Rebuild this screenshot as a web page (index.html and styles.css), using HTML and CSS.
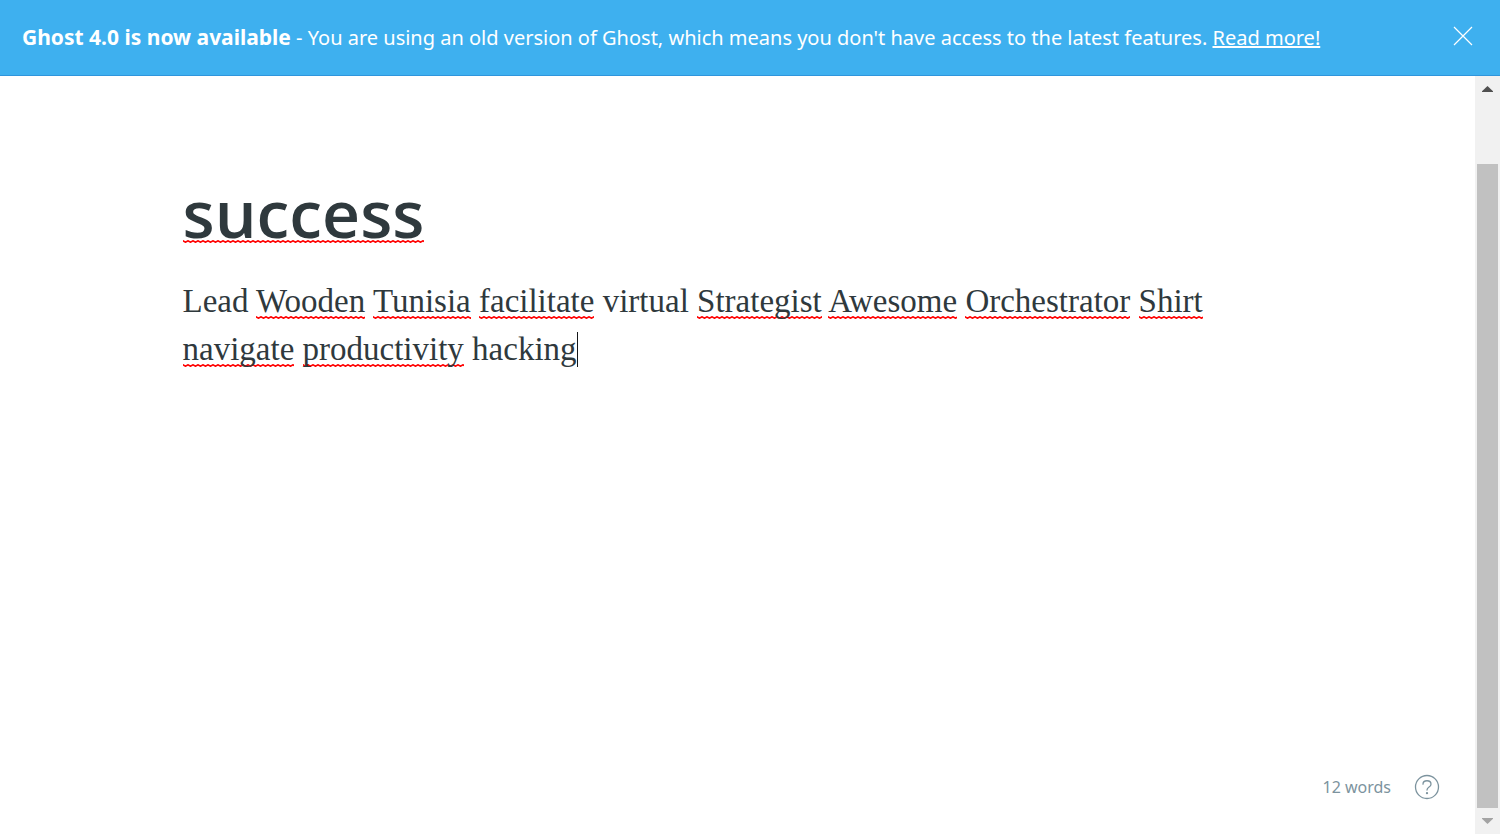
FILE: index.html
```html
<!DOCTYPE html>
<html lang="en">
<head>
<meta charset="utf-8">
<meta name="viewport" content="width=device-width, initial-scale=1">
<title>Editor - Ghost</title>
<link rel="stylesheet" href="styles.css">
</head>
<body>
<div class="app">
  <header class="alert">
    <p class="alert-text"><strong class="alert-title">Ghost 4.0 is now available</strong> - You are using an old version of Ghost, which means you don't have access to the latest features. <a class="alert-link" href="#">Read more!</a></p>
    <button class="alert-close" type="button" aria-label="Close">
      <svg width="20" height="20" viewBox="0 0 20 20" fill="none" stroke="currentColor" stroke-width="1.2"><path d="M1 1l18 18M19 1L1 19"/></svg>
    </button>
  </header>
  <div class="workspace">
    <main class="editor">
      <article class="post">
        <h1 class="post-title"><span class="misspelt">success</span></h1>
        <p class="post-body">Lead <span class="misspelt">Wooden</span> <span class="misspelt">Tunisia</span> <span class="misspelt">facilitate</span> virtual <span class="misspelt">Strategist</span> <span class="misspelt">Awesome</span> <span class="misspelt">Orchestrator</span> <span class="misspelt">Shirt</span> <span class="misspelt">navigate</span> <span class="misspelt">productivity</span> hacking<span class="caret"></span></p>
      </article>
      <footer class="status">
        <span class="word-count">12 words</span>
        <a class="help" href="#" aria-label="Help">
          <svg width="26" height="26" viewBox="0 0 26 26" fill="none" stroke="currentColor" stroke-width="1.3" stroke-linecap="round"><circle cx="13" cy="13" r="11.500"/><path d="M9 10.200C9 5.600 17 5.600 17 10.200C17 13.200 13 12.800 13 16"/><circle cx="13" cy="19.200" r=".5"/></svg>
        </a>
      </footer>
    </main>
    <div class="scrollbar" aria-hidden="true">
      <svg class="arrow arrow-up" width="11" height="6" viewBox="0 0 11 6"><path fill="currentColor" d="M0 6v-.8L5.500 0 11 5.200V6z"/></svg>
      <div class="track"><div class="thumb"></div></div>
      <svg class="arrow arrow-down" width="11" height="6" viewBox="0 0 11 6"><path fill="currentColor" d="M0 0v.8L5.500 6 11 .8V0z"/></svg>
    </div>
  </div>
</div>
</body>
</html>
```
FILE: styles.css
```css
* {
  box-sizing: border-box;
}

body {
  margin: 0;
  background: #fff;
  color: #2f393d;
  font-family: "Segoe UI", "Noto Sans", "Open Sans", sans-serif;
}

.app {
  display: flex;
  flex-direction: column;
  min-height: 100vh;
}

.alert {
  display: flex;
  align-items: center;
  justify-content: space-between;
  padding: 20px 27px 20px 22px;
  border-bottom: 1px solid #2f95dc;
  background: #3eb0ef;
  color: #fff;
}

.alert-text {
  margin: 0;
  font-size: 20px;
  line-height: 35px;
}

.alert-title {
  font-size: 21px;
  font-weight: 700;
}

.alert-link {
  color: inherit;
  text-decoration: underline;
  text-decoration-thickness: 2px;
}

.alert-close {
  display: flex;
  padding: 0 0 3px;
  border: 0;
  background: none;
  color: inherit;
  cursor: pointer;
}

.workspace {
  flex: 1;
  display: flex;
}

.editor {
  flex: 1;
  display: flex;
  flex-direction: column;
  padding: 105px 35px 34px;
}

.post {
  flex: 1;
  width: 100%;
  max-width: 1110px;
  margin: 0 auto;
}

.post-title {
  display: flex;
  margin: 0 0 34px;
  font-family: "Segoe UI", "Open Sans", "Noto Sans", sans-serif;
  font-size: 66px;
  font-weight: 600;
  line-height: 62px;
}

.post-body {
  margin: 0;
  font-family: Georgia, "Liberation Serif", serif;
  font-size: 33px;
  line-height: 48px;
}

.misspelt {
  background: url("data:image/svg+xml,%3Csvg xmlns='http://www.w3.org/2000/svg' width='5' height='3'%3E%3Cpath d='M-2.500 2.200L0 .8 2.500 2.200 5 .8 7.500 2.200' fill='none' stroke='%23f00' stroke-width='1.600'/%3E%3C/svg%3E") left bottom repeat-x;
}

.caret {
  display: inline-block;
  width: 1px;
  height: 35px;
  background: #15171a;
  vertical-align: -7px;
}

.status {
  display: flex;
  align-items: center;
  justify-content: flex-end;
  gap: 23px;
  color: #7c939e;
}

.word-count {
  font-size: 16px;
  line-height: 24px;
}

.help {
  display: flex;
  color: inherit;
}

.scrollbar {
  display: flex;
  flex-direction: column;
  align-items: center;
  width: 25px;
  padding: 10px 2px;
  gap: 10px;
  background: #f1f1f1;
}

.track {
  flex: 1;
  display: flex;
  align-items: flex-end;
  width: 100%;
}

.thumb {
  width: 100%;
  height: 91.2%;
  background: #c1c1c1;
}

.arrow-up {
  color: #505050;
}

.arrow-down {
  color: #a3a3a3;
}
```
